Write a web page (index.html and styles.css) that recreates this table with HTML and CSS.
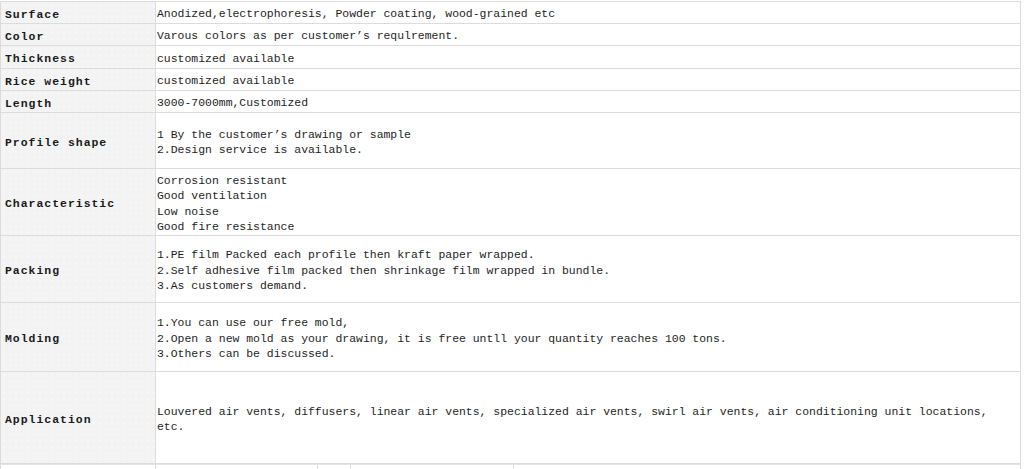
FILE: index.html
```html
<!DOCTYPE html>
<html>
<head>
<meta charset="utf-8">
<link rel="stylesheet" href="styles.css">
</head>
<body>
<div class="spec">
  <div class="row h22"><div class="key">Surface</div><div class="val">Anodized,electrophoresis, Powder coating, wood-grained etc</div></div>
  <div class="row h22"><div class="key">Color</div><div class="val">Varous colors as per customer’s requlrement.</div></div>
  <div class="row h23"><div class="key">Thickness</div><div class="val">customized available</div></div>
  <div class="row h22"><div class="key">Rice weight</div><div class="val">customized available</div></div>
  <div class="row h22"><div class="key">Length</div><div class="val">3000-7000mm,Customized</div></div>
  <div class="row h56"><div class="key">Profile shape</div><div class="val"><div>1 By the customer’s drawing or sample</div><div>2.Design service is available.</div></div></div>
  <div class="row h67"><div class="key">Characteristic</div><div class="val"><div>Corrosion resistant</div><div>Good ventilation</div><div>Low noise</div><div>Good fire resistance</div></div></div>
  <div class="row h67"><div class="key">Packing</div><div class="val"><div>1.PE film Packed each profile then kraft paper wrapped.</div><div>2.Self adhesive film packed then shrinkage film wrapped in bundle.</div><div>3.As customers demand.</div></div></div>
  <div class="row h69"><div class="key">Molding</div><div class="val"><div>1.You can use our free mold,</div><div>2.Open a new mold as your drawing, it is free untll your quantity reaches 100 tons.</div><div>3.Others can be discussed.</div></div></div>
  <div class="row h92"><div class="key">Application</div><div class="val"><div>Louvered air vents, diffusers, linear air vents, specialized air vents, swirl air vents, air conditioning unit locations, etc.</div></div></div>
</div>
<div class="next">
  <div class="ncell c1"></div>
  <div class="ncell c2"></div>
  <div class="ncell c3"></div>
  <div class="ncell c4"></div>
  <div class="ncell c5"></div>
</div>
</body>
</html>
```
FILE: styles.css
```css
html, body {
  margin: 0;
  padding: 0;
  background: #fff;
}
body {
  padding-top: 1px;
  font-family: "Liberation Mono", "DejaVu Sans Mono", monospace;
  font-size: 11.45px;
  color: #1e1e1e;
}
.spec {
  width: 1021px;
  box-sizing: border-box;
  border-top: 1px solid #dcdcdc;
  border-left: 1px solid #dcdcdc;
  border-right: 1px solid #dcdcdc;
}
.row {
  display: flex;
  box-sizing: border-box;
  border-bottom: 1px solid #dcdcdc;
}
.h22 { height: 22px; }
.h23 { height: 23px; }
.h56 { height: 56px; }
.h67 { height: 67px; }
.h69 { height: 69px; }
.h92 { height: 92px; }
.key {
  width: 155px;
  flex: none;
  box-sizing: border-box;
  border-right: 1px solid #dcdcdc;
  background-color: #f3f3f3;
  background-image: radial-gradient(circle, #f9f9f9 0.6px, transparent 0.9px);
  background-size: 6px 6px;
  padding-left: 4px;
  display: flex;
  align-items: center;
  font-weight: bold;
  letter-spacing: 1px;
  color: #1a1a1a;
  padding-top: 3px;
}
.val {
  flex: 1;
  padding-left: 1px;
  padding-top: 3px;
  display: flex;
  flex-direction: column;
  justify-content: center;
  line-height: 15.5px;
}
.next {
  display: flex;
  width: 1021px;
  height: 6px;
  box-sizing: border-box;
  border-top: 1px solid #e4e4e4;
  border-left: 1px solid #dcdcdc;
}
.ncell {
  box-sizing: border-box;
  border-right: 1px solid #dcdcdc;
  flex: none;
}
.c1 { width: 155px; }
.c2 { width: 162px; }
.c3 { width: 33px; }
.c4 { width: 163px; }
.c5 { flex: 1; }
```
